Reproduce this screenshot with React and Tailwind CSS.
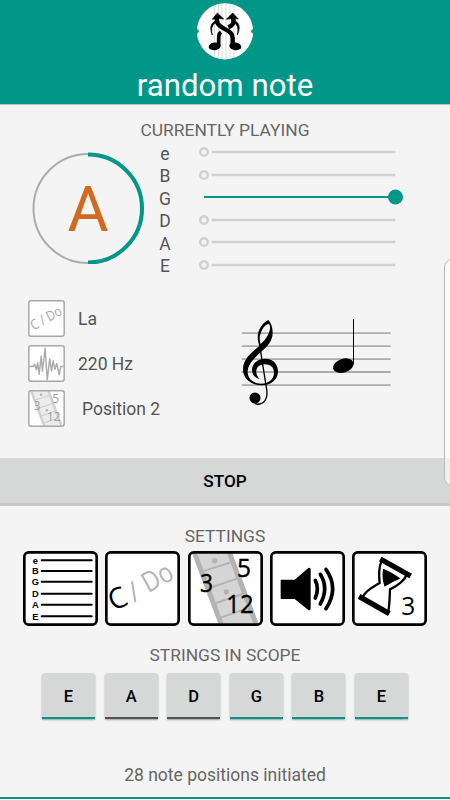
import React from "react";

const strings = ["e", "B", "G", "D", "A", "E"];

function Logo() {
  return (
    <svg className="mt-[3px] h-[57px] w-[56px]" viewBox="231 9 168 171" fill="none">
      <circle cx="315" cy="94" r="84.5" fill="#fff" />
      <path d="M284 16V172M295 12V176M306 10V178M318 10V178M330 12V176M342 15V173" stroke="#d0d0d0" strokeWidth="2.5" />
      <circle cx="230" cy="94" r="6.5" fill="#009688" />
      <circle cx="400" cy="94" r="6.5" fill="#009688" />
      <path d="M292 50C287 70 296 77 312 86C330 95 338 101 338 114V139" stroke="#000" strokeWidth="13" />
      <path d="M337 50C345 66 340 76 325 82" stroke="#000" strokeWidth="13" />
      <path d="M303 96C295 102 296 110 296 138" stroke="#000" strokeWidth="11" />
      <path d="M292 39L311 57L296 55L277 58Z" fill="#000" stroke="#000" strokeWidth="2" />
      <path d="M338 39L355 57L338 55L319 58Z" fill="#000" stroke="#000" strokeWidth="2" />
      <path d="M287 63C272 68 268 86 277 105C272 86 276 73 289 68ZM344 62C360 69 361 86 352 105C356 86 353 74 342 68Z" fill="#000" stroke="#000" strokeWidth="2" />
      <ellipse cx="284" cy="139" rx="18" ry="11.5" fill="#000" transform="rotate(-8 284 139)" />
      <ellipse cx="346" cy="139" rx="18" ry="11.5" fill="#000" transform="rotate(8 346 139)" />
    </svg>
  );
}

function Dial() {
  return (
    <div className="ml-8 mt-3 grid h-28 w-28 place-items-center">
      <svg className="col-start-1 row-start-1 h-28 w-28" viewBox="0 0 112 112" fill="none">
        <circle cx="56" cy="56.5" r="54.5" stroke="#acacac" strokeWidth="2" />
        <path d="M56 2.5A54 54 0 0 1 56 110.5" stroke="#009688" strokeWidth="4" />
      </svg>
      <span className="col-start-1 row-start-1 pt-[3px] text-[63px] leading-none text-[#d2691e]">A</span>
    </div>
  );
}

function StringSlider({ name, active }) {
  return (
    <div className="flex h-[22.5px] items-center">
      <span className="w-[26px] pt-[4px] text-center text-[17.5px] leading-none">{name}</span>
      <svg className="ml-4 h-[22px] w-[214px]" viewBox="194 0 214 22" fill="none">
        {active ? (
          <>
            <path d="M204 11H396" stroke="#009688" strokeWidth="2.2" />
            <circle cx="395.5" cy="11" r="7.5" fill="#009688" />
          </>
        ) : (
          <>
            <circle cx="204" cy="11" r="3.8" stroke="#d0d0d0" strokeWidth="2.4" />
            <path d="M211.7 11H395.3" stroke="#d0d0d0" strokeWidth="2.3" />
          </>
        )}
      </svg>
    </div>
  );
}

function Frame({ children, small }) {
  return (
    <svg className={small ? "h-[37px] w-[37px] overflow-visible" : "h-[75px] w-[75px] overflow-visible"} viewBox="0 0 225 225" fill="none">
      <rect x="4" y="4" width="217" height="217" rx={small ? 12 : 13} fill="#fff" />
      {children}
      <rect
        x={small ? 5 : 4}
        y={small ? 5 : 4}
        width={small ? 215 : 217}
        height={small ? 215 : 217}
        rx="13"
        stroke={small ? "#a8a8a8" : "#000"}
        strokeWidth={small ? 9 : 8}
      />
    </svg>
  );
}

function NoteName({ small }) {
  const main = small ? "#a8a8a8" : "#000";
  const rest = small ? "#a8a8a8" : "#b5b5b5";
  return (
    <g className="font-['Open_Sans',sans-serif]">
      {small ? (
        <text transform="translate(34 185) rotate(-29)" fontSize="84" fill={main} textLength="205" lengthAdjust="spacingAndGlyphs">C / Do</text>
      ) : (
        <>
          <text transform="translate(25 181) rotate(-24)" fontSize="86" fill={main}>C</text>
          <path d="M81 91L91 153" stroke={rest} strokeWidth="6" />
          <text transform="translate(130 127) rotate(-29)" fontSize="84" fill={rest} textLength="94" lengthAdjust="spacingAndGlyphs">Do</text>
        </>
      )}
    </g>
  );
}

function Fretboard({ small }) {
  return (
    <>
      <path d="M14 7H131L210 218H94Z" fill={small ? "#ececec" : "#d5d5d5"} />
      <path d="M20 7L99 218M125 7L204 218" stroke={small ? "#d0d0d0" : "#b3b3b3"} strokeWidth="15" />
      <path d="M44 61L128 34M65 111L146 83M84 156L164 129M97 200L178 172" stroke={small ? "#c8c8c8" : "#b3b3b3"} strokeWidth="6" />
      <circle cx="80" cy="29" r="8" fill="#b3b3b3" />
      <circle cx="115" cy="123" r="8" fill="#b3b3b3" />
      <g className="font-['Open_Sans',sans-serif]" fontSize="76" fill={small ? "#a0a0a0" : "#000"} stroke={small ? "none" : "#000"} strokeWidth="1.2">
        <text x="36" y="122" textLength="39" lengthAdjust="spacingAndGlyphs">3</text>
        <text x="147" y="77" textLength="42" lengthAdjust="spacingAndGlyphs">5</text>
        <text x="115" y="187" textLength="82" lengthAdjust="spacingAndGlyphs">12</text>
      </g>
    </>
  );
}

function Wave() {
  return (
    <path
      d="M8 131H31L41 117L51 150L59 108L68 178L80 68L88 159L104 20L117 211L132 85L143 158L153 96L164 148L175 113L190 181L199 131H217"
      stroke="#acacac"
      strokeWidth="9"
      strokeLinejoin="round"
    />
  );
}

function StringList() {
  const ys = [28, 60, 92, 128, 161, 196];
  return (
    <>
      <g className="font-['Liberation_Sans',sans-serif]" fontSize="28" fontWeight="700" fill="#000" textAnchor="middle">
        {strings.map((s, i) => (
          <text key={s} x="37" y={ys[i] + 10}>{s}</text>
        ))}
      </g>
      {ys.map((y) => (
        <path key={y} d={`M56 ${y}H206`} stroke="#000" strokeWidth="6" strokeLinecap="round" />
      ))}
    </>
  );
}

function Speaker() {
  return (
    <>
      <path d="M34 86H74L115 51Q122 48 122 56V172Q122 181 114 176L74 144H34Q32 144 32 141V89Q32 86 34 86Z" fill="#000" />
      <path d="M136 88Q148 112 136 141M151 70Q177 112 151 159M168 55Q208 112 168 173" stroke="#000" strokeWidth="11" strokeLinecap="round" />
    </>
  );
}

function Hourglass() {
  return (
    <>
      <path d="M85 24L176 75M21 136L112 188" stroke="#000" strokeWidth="16" />
      <path d="M88 31C81 48 80 70 83 96C66 107 44 115 33 136M164 72C155 92 139 103 114 115C113 139 113 159 109 181" stroke="#000" strokeWidth="7" />
      <path d="M95 56Q119 66 141 82Q121 90 99 104Q91 82 95 56Z" fill="#000" stroke="#000" strokeWidth="4" />
      <text x="148" y="192" className="font-['Open_Sans',sans-serif]" fontSize="74" fill="#000" textLength="42" lengthAdjust="spacingAndGlyphs">3</text>
    </>
  );
}

function Staff() {
  return (
    <svg className="h-[120px] w-[180px]" viewBox="0 0 540 360" fill="none">
      <path d="M50 99.5H497M50 138.5H497M50 177.5H497M50 216H497M50 255.5H497" stroke="#acacac" strokeWidth="5.5" />
      <path
        fill="#000"
        fillRule="evenodd"
        d="M130 60C115 66 98 88 98 112C98 122 101 132 103 138C82 156 54 176 54 208C54 238 80 256 110 256C140 256 159 238 159 214C159 192 143 176 122 176C98 176 81 190 81 210C81 224 90 234 104 237C97 230 93 222 94 212C95 200 105 193 120 193C136 193 147 202 147 218C147 238 130 251 108 251C84 250 68 236 68 216C68 192 88 174 108 156C128 138 143 122 143 98C143 82 138 68 130 60ZM132 72C138 80 135 92 129 104C123 116 116 124 107 132C102 120 104 104 110 92C116 80 124 72 132 72Z"
      />
      <path d="M104 136L124 262C130 290 122 313 97 313" stroke="#000" strokeWidth="4" />
      <circle cx="90" cy="294" r="16.5" fill="#000" />
      <path d="M90 310Q96 315 104 312" stroke="#000" strokeWidth="4" />
      <ellipse cx="355" cy="197" rx="32" ry="20.5" fill="#000" transform="rotate(-18 355 197)" />
      <path d="M385.5 57V192" stroke="#000" strokeWidth="3" />
    </svg>
  );
}

function Heading({ children }) {
  return <h2 className="text-center text-[17.4px] leading-5 text-[#666]">{children}</h2>;
}

const scope = [
  ["E", true],
  ["A", false],
  ["D", false],
  ["G", true],
  ["B", true],
  ["E", true],
];

export default function App() {
  return (
    <div className="relative flex h-[800px] w-[450px] flex-col overflow-hidden bg-[#f4f4f4] font-[Roboto,sans-serif] text-[#555]">
      <header className="flex h-[105px] shrink-0 flex-col items-center border-b border-[#b5c4c2] bg-[#009688]">
        <Logo />
        <h1 className="mt-[8px] text-[31.2px] leading-9 text-white">random note</h1>
      </header>

      <section className="flex h-[175px] shrink-0 flex-col pt-[15px]">
        <Heading>CURRENTLY PLAYING</Heading>
        <div className="flex">
          <Dial />
          <div className="ml-2 mt-[1px] flex flex-col">
            {strings.map((s) => (
              <StringSlider key={s} name={s} active={s === "G"} />
            ))}
          </div>
        </div>
      </section>

      <section className="flex h-[178px] shrink-0 pl-7 pt-5 text-[17.5px]">
        <ul className="flex w-[197px] flex-col gap-2">
          <li className="flex h-[37px] items-center"><Frame small><NoteName small /></Frame><span className="ml-[13px] pt-[2px]">La</span></li>
          <li className="flex h-[37px] items-center"><Frame small><Wave /></Frame><span className="ml-[13px] pt-[2px]">220 Hz</span></li>
          <li className="flex h-[37px] items-center"><Frame small><Fretboard small /></Frame><span className="ml-[17px] pt-[2px]">Position 2</span></li>
        </ul>
        <Staff />
      </section>

      <button className="h-[48px] shrink-0 border-b-[3px] border-[#c8c8c8] bg-[#d6d8d7] pt-[3px] text-[17.2px] font-medium text-black">STOP</button>

      <section className="pt-5">
        <Heading>SETTINGS</Heading>
        <div className="mt-[5px] flex justify-center gap-[7.4px]">
          <Frame><StringList /></Frame>
          <Frame><NoteName /></Frame>
          <Frame><Fretboard /></Frame>
          <Frame><Speaker /></Frame>
          <Frame><Hourglass /></Frame>
        </div>
      </section>

      <section className="pt-[19px]">
        <Heading>STRINGS IN SCOPE</Heading>
        <div className="mt-2 flex justify-center gap-[9.6px]">
          {scope.map(([s, on], i) => (
            <button
              key={i}
              className={`h-[46px] w-[53px] rounded-t-[3px] border-b-2 bg-[#d6d8d7] pt-[4px] text-[16.5px] font-medium text-black shadow-[0_1px_2px_rgba(0,0,0,0.35)] ${on ? "border-[#009688]" : "border-[#505352]"}`}
            >
              {s}
            </button>
          ))}
        </div>
      </section>

      <footer className="mt-auto h-[35px] border-b-[3px] border-[#f4f4f4] text-center text-[17.5px] leading-5 text-[#666]">
        <p>28 note positions initiated</p>
        <div className="mt-3 h-[2px] bg-[#009688]" />
      </footer>

      <div className="absolute -right-2 top-[259px] h-[227px] w-[14px] rounded-l-lg border border-[#bbb] bg-white/60" />
    </div>
  );
}
